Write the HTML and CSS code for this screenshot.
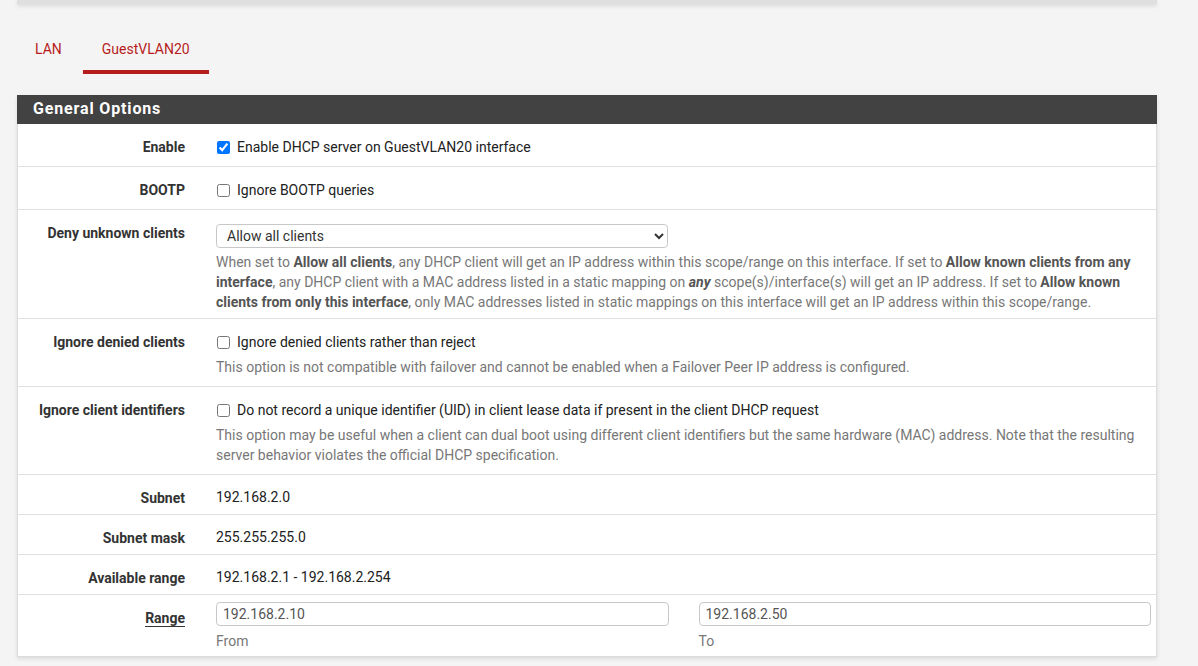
FILE: index.html
```html
<!DOCTYPE html>
<html lang="en">
<head>
	<meta charset="UTF-8">
	<title>DHCP Server</title>
	<link rel="stylesheet" href="styles.css">
</head>
<body>
	<div class="topbar"></div>

	<ul class="tabs">
		<li class="tab"><a href="#">LAN</a></li>
		<li class="tab active"><a href="#">GuestVLAN20</a></li>
	</ul>

	<div class="panel">
		<div class="panel-heading">General Options</div>

		<div class="row check-row">
			<div class="label">Enable</div>
			<div class="field">
				<label class="check"><input type="checkbox" checked> Enable DHCP server on GuestVLAN20 interface</label>
			</div>
		</div>

		<div class="row check-row">
			<div class="label">BOOTP</div>
			<div class="field">
				<label class="check"><input type="checkbox"> Ignore BOOTP queries</label>
			</div>
		</div>

		<div class="row select-row">
			<div class="label">Deny unknown clients</div>
			<div class="field">
				<select class="control half">
					<option>Allow all clients</option>
				</select>
				<p class="help">When set to <b>Allow all clients</b>, any DHCP client will get an IP address within this scope/range on this interface. If set to <b>Allow known clients from any interface</b>, any DHCP client with a MAC address listed in a static mapping on <b><i>any</i></b> scope(s)/interface(s) will get an IP address. If set to <b>Allow known clients from only this interface</b>, only MAC addresses listed in static mappings on this interface will get an IP address within this scope/range.</p>
			</div>
		</div>

		<div class="row check-row">
			<div class="label">Ignore denied clients</div>
			<div class="field">
				<label class="check"><input type="checkbox"> Ignore denied clients rather than reject</label>
				<p class="help">This option is not compatible with failover and cannot be enabled when a Failover Peer IP address is configured.</p>
			</div>
		</div>

		<div class="row check-row">
			<div class="label">Ignore client identifiers</div>
			<div class="field">
				<label class="check"><input type="checkbox"> Do not record a unique identifier (UID) in client lease data if present in the client DHCP request</label>
				<p class="help">This option may be useful when a client can dual boot using different client identifiers but the same hardware (MAC) address. Note that the resulting server behavior violates the official DHCP specification.</p>
			</div>
		</div>

		<div class="row text-row">
			<div class="label">Subnet</div>
			<div class="field">192.168.2.0</div>
		</div>

		<div class="row text-row">
			<div class="label">Subnet mask</div>
			<div class="field">255.255.255.0</div>
		</div>

		<div class="row text-row">
			<div class="label">Available range</div>
			<div class="field">192.168.2.1 - 192.168.2.254</div>
		</div>

		<div class="row range-row">
			<div class="label"><span class="abbr">Range</span></div>
			<div class="field range">
				<div class="range-col">
					<input class="control" type="text" value="192.168.2.10">
					<p class="help">From</p>
				</div>
				<div class="range-col">
					<input class="control" type="text" value="192.168.2.50">
					<p class="help">To</p>
				</div>
			</div>
		</div>
	</div>
</body>
</html>
```

FILE: styles.css
```css
*{
	margin: 0;
	padding: 0;
	box-sizing: border-box;
}
ul,li{
	list-style: none;
}
body{
	background: #f4f4f4;
	font-family: Roboto, "Liberation Sans", sans-serif;
	font-size: 14px;
	line-height: 20px;
	color: #212121;
	height: 666px;
	overflow: hidden;
}
.topbar{
	width: 1140px;
	height: 4px;
	margin-left: 17px;
	background: #dfdfdf;
	box-shadow: 0 2px 4px rgba(0,0,0,0.12);
}
.tabs{
	display: flex;
	gap: 2px;
	margin: 25px 0 21px 16px;
}
.tab a{
	display: block;
	padding: 10px 19px 11px;
	border-bottom: 4px solid transparent;
	color: #b71c1c;
	text-decoration: none;
}
.tab.active a{
	border-bottom-color: #b71c1c;
}
.panel{
	width: 1140px;
	margin-left: 17px;
	background: #fff;
	border: 1px solid #dcdcdc;
	border-top: 0;
	box-shadow: 0 2px 4px rgba(0,0,0,0.1);
}
.panel-heading{
	height: 29px;
	line-height: 28px;
	padding-left: 16px;
	background: #424242;
	color: #fff;
	font-size: 16px;
	font-weight: bold;
	letter-spacing: 0.85px;
	margin: 0 -1px;
}
.row{
	display: grid;
	grid-template-columns: 183px 1fr;
	border-bottom: 1px solid #e0e0e0;
}
.row:last-child{
	border-bottom: 0;
}
.label{
	padding: 13px 16px 0 0;
	text-align: right;
	font-weight: bold;
	color: #333;
}
.abbr{
	border-bottom: 1px solid #333;
}
.field{
	padding: 0 5px 0 15px;
}
.check-row .field{
	padding-top: 13px;
	padding-bottom: 9px;
}
.text-row .field{
	padding-top: 12px;
	padding-bottom: 7px;
}
.select-row .field{
	padding-top: 14px;
	padding-bottom: 6px;
}
.range-row .field{
	padding-top: 7px;
	padding-bottom: 5px;
}
.check{
	display: flex;
	align-items: center;
	gap: 7px;
}
.check input{
	width: 13px;
	height: 13px;
	margin-left: 1px;
	accent-color: #0075ff;
}
.help{
	margin-top: 5px;
	color: #777;
}
.select-row .help{
	margin-top: 4px;
}
.help b{
	color: #555;
}
.control{
	display: block;
	height: 24px;
	border: 1px solid #c8c8c8;
	border-radius: 4px;
	background: #fff;
	font-family: inherit;
	font-size: 14px;
	color: #555;
	padding: 0 6px;
	width: 100%;
}
select.control{
	padding: 0 6px;
	color: #333;
}
.half{
	width: 452px;
}
.range{
	display: grid;
	grid-template-columns: 1fr 1fr;
	column-gap: 30px;
}
```
